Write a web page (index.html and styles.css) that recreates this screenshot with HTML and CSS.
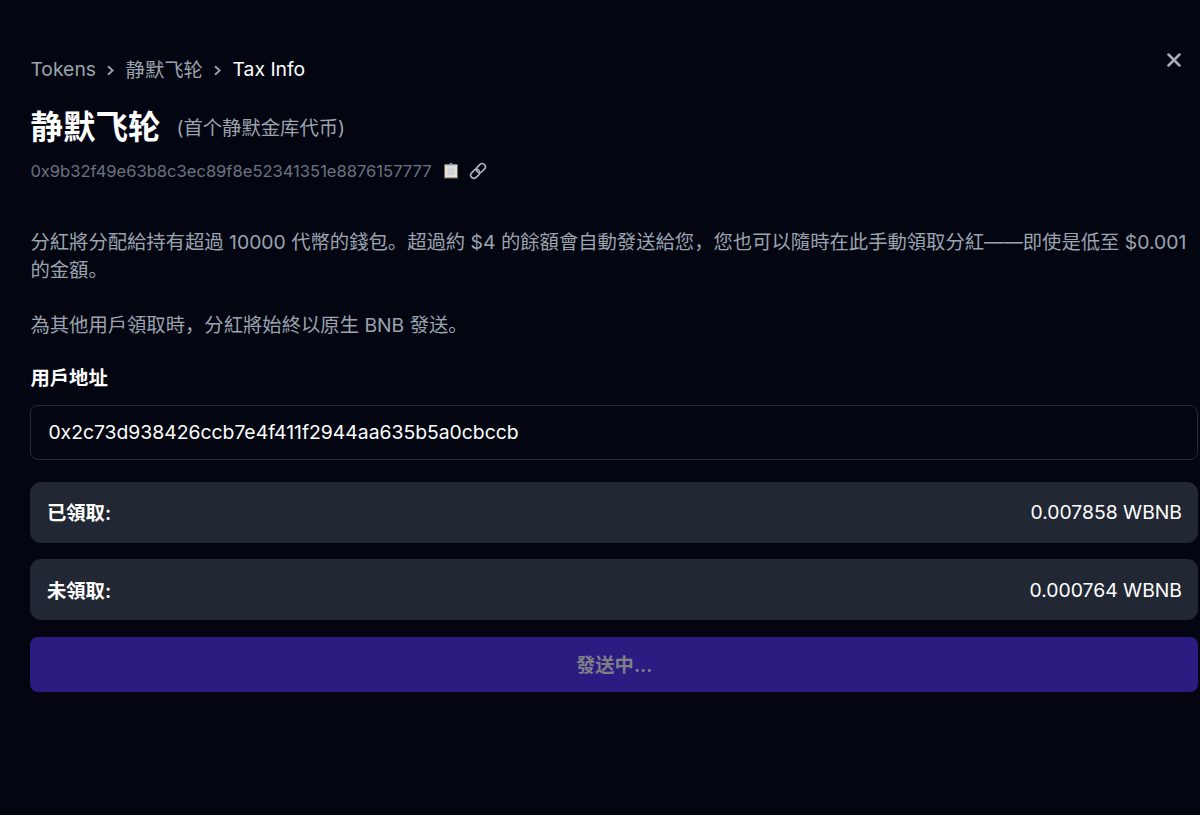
FILE: index.html
```html
<!DOCTYPE html>
<html lang="zh-Hans">
	<head>
		<meta charset="utf-8">
		<title>Tax Info</title>
		<link rel="stylesheet" href="styles.css">
	</head>
	<body>
		<div class="modal">
			<div class="top">
				<nav class="breadcrumb">
					<span>Tokens</span>
					<svg class="sep" viewBox="0 0 7 11" width="7" height="11"><path d="M1 1.200L5.700 5.500L1 9.800"/></svg>
					<span>静默飞轮</span>
					<svg class="sep" viewBox="0 0 7 11" width="7" height="11"><path d="M1 1.200L5.700 5.500L1 9.800"/></svg>
					<span class="current">Tax Info</span>
				</nav>
				<button class="close" aria-label="Close">
					<svg viewBox="0 0 14 14" width="14" height="14"><path d="M1.500 1.500L12.500 12.500M12.500 1.500L1.500 12.500"/></svg>
				</button>
			</div>
			<div class="title">
				<h1>静默飞轮</h1>
				<span class="subtitle">(首个静默金库代币)</span>
			</div>
			<div class="contract">
				<span>0x9b32f49e63b8c3ec89f8e52341351e8876157777</span>
				<svg class="copy" viewBox="0 0 16 18" width="16" height="18">
					<rect x="1" y="2" width="14" height="14.500" rx="0.5" fill="#75665a"/>
					<rect x="2" y="3" width="12" height="12.500" fill="#e6e1d6"/>
					<rect x="4.500" y="5.500" width="7" height="7.500" fill="#d0d1da"/>
					<path d="M3.500 3.500V2.200h3a1.500 1.500 0 0 1 3 0h3v1.300z" fill="#8d98ac"/>
				</svg>
				<svg class="link" viewBox="0 0 18 18" width="18" height="18">
					<g transform="rotate(-45 9 9)">
						<rect x="0" y="5.800" width="10" height="6.400" rx="3.200"/>
						<rect x="8" y="5.800" width="10" height="6.400" rx="3.200"/>
					</g>
				</svg>
			</div>
			<p class="desc first">分紅將分配給持有超過 10000 代幣的錢包。超過約 $4 的餘額會自動發送給您，您也可以隨時在此手動領取分紅——即使是低至 $0.001 的金額。</p>
			<p class="desc">為其他用戶領取時，分紅將始終以原生 BNB 發送。</p>
			<label class="label" for="address">用戶地址</label>
			<input class="address" id="address" type="text" value="0x2c73d938426ccb7e4f411f2944aa635b5a0cbccb">
			<div class="row">
				<span class="name">已領取:</span>
				<span>0.007858 WBNB</span>
			</div>
			<div class="row">
				<span class="name">未領取:</span>
				<span>0.000764 WBNB</span>
			</div>
			<button class="send" disabled>發送中...</button>
		</div>
	</body>
</html>
```
FILE: styles.css
```css
* {
	box-sizing: border-box;
}
body {
	margin: 0;
	height: 815px;
	overflow: hidden;
	background: #030611;
	color: #fff;
	font-family: Inter, "Noto Sans CJK SC", sans-serif;
	font-size: 19.330px;
}
.modal {
	padding: 50px 2px 0 30.400px;
}
.top {
	display: flex;
	justify-content: space-between;
	height: 38px;
}
.breadcrumb {
	display: flex;
	align-items: center;
	gap: 11.300px;
	color: #9ca3af;
}
.sep {
	margin-top: 3px;
	fill: none;
	stroke: #9ca3af;
	stroke-width: 1.900;
}
.current {
	color: #fff;
}
.close {
	width: 24px;
	height: 20px;
	margin-right: 12px;
	padding: 0;
	border: 0;
	background: none;
}
.close svg {
	display: block;
	margin: 3px auto;
	fill: none;
	stroke: #a9adb8;
	stroke-width: 2.5;
	stroke-linecap: round;
}
.title {
	display: flex;
	align-items: center;
	gap: 16px;
	height: 76px;
}
h1 {
	margin: 4px 0 0;
	font-size: 32.500px;
	line-height: 40px;
}
.subtitle {
	margin-top: 1px;
	color: #9ca3af;
}
.contract {
	display: flex;
	align-items: center;
	height: 14px;
	color: #6b7280;
	font-size: 16.560px;
}
.copy {
	margin-left: 11px;
}
.link {
	margin-left: 10px;
	fill: none;
	stroke: #aeb4bd;
	stroke-width: 1.600;
}
.desc {
	margin: 0 0 27.500px;
	color: #9ca3af;
	line-height: 27.620px;
}
.first {
	margin-top: 51px;
}
.label {
	display: block;
	height: 28px;
	margin-top: -3px;
	margin-bottom: 13px;
	line-height: 28px;
	font-weight: 600;
}
.address {
	display: block;
	width: 100%;
	height: 55px;
	margin-bottom: 22px;
	padding: 0 17px;
	border: 1px solid #252a35;
	border-radius: 8px;
	background: #030611;
	color: #fff;
	font: inherit;
}
.row {
	display: flex;
	align-items: center;
	justify-content: space-between;
	height: 61px;
	margin-bottom: 16.500px;
	padding: 0 16px 0 16.500px;
	border-radius: 11px;
	background: #212833;
}
.name {
	font-weight: 600;
}
.send {
	display: block;
	width: 100%;
	height: 55px;
	border: 0;
	border-radius: 8px;
	background: #2a1c80;
	color: #7f7f88;
	font: inherit;
	font-weight: 600;
}
```
